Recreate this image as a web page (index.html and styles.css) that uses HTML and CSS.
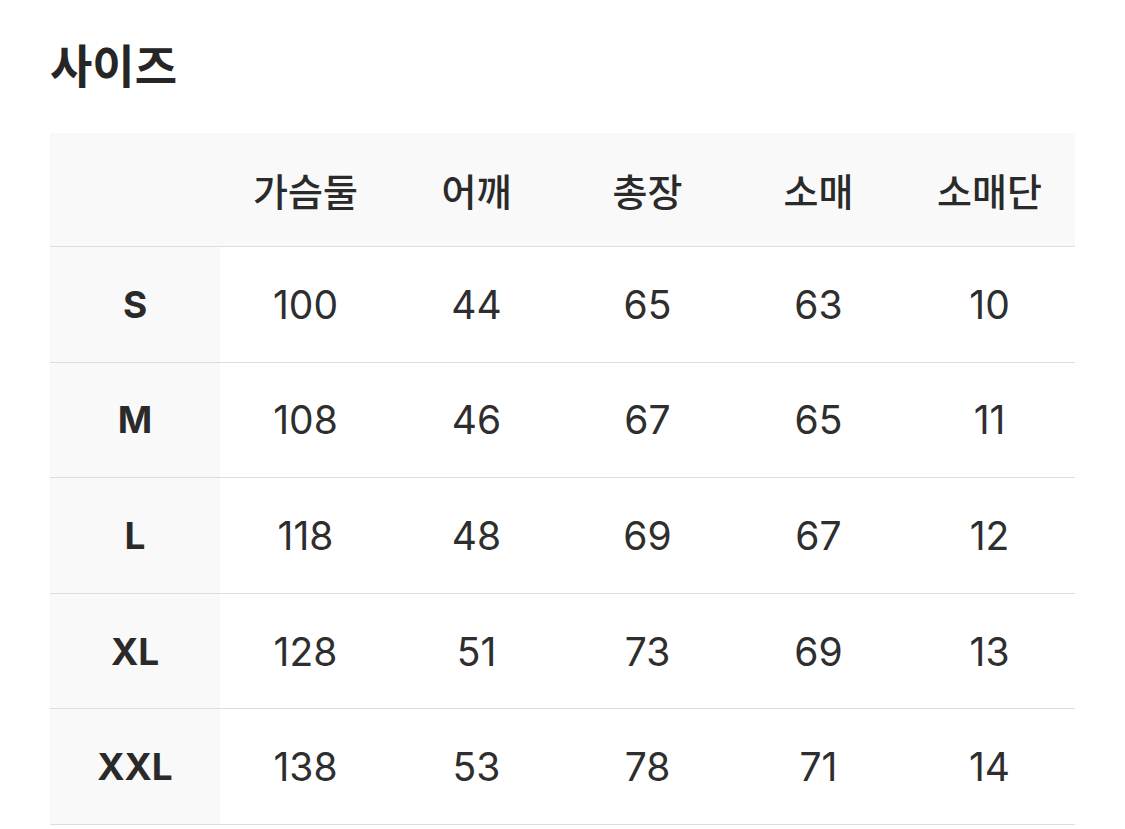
FILE: index.html
```html
<!DOCTYPE html>
<html lang="ko">
<head>
<meta charset="utf-8">
<link rel="stylesheet" href="styles.css">
</head>
<body>
<div class="page">
  <h1 class="title">사이즈</h1>
  <div class="size-table">
    <div class="cell head corner"></div>
    <div class="cell head">가슴둘</div>
    <div class="cell head">어깨</div>
    <div class="cell head">총장</div>
    <div class="cell head">소매</div>
    <div class="cell head">소매단</div>

    <div class="cell label">S</div>
    <div class="cell">100</div><div class="cell">44</div><div class="cell">65</div><div class="cell">63</div><div class="cell">10</div>

    <div class="cell label">M</div>
    <div class="cell">108</div><div class="cell">46</div><div class="cell">67</div><div class="cell">65</div><div class="cell">11</div>

    <div class="cell label">L</div>
    <div class="cell">118</div><div class="cell">48</div><div class="cell">69</div><div class="cell">67</div><div class="cell">12</div>

    <div class="cell label">XL</div>
    <div class="cell">128</div><div class="cell">51</div><div class="cell">73</div><div class="cell">69</div><div class="cell">13</div>

    <div class="cell label">XXL</div>
    <div class="cell">138</div><div class="cell">53</div><div class="cell">78</div><div class="cell">71</div><div class="cell">14</div>
  </div>
</div>
</body>
</html>
```
FILE: styles.css
```css
html, body {
  margin: 0;
  padding: 0;
  background: #ffffff;
}
body {
  font-family: Inter, "Noto Sans CJK KR", sans-serif;
  color: #2b2b2b;
}
.page {
  padding: 37px 50px 0 50px;
  width: 1025px;
}
.title {
  margin: 0;
  height: 52px;
  line-height: 52px;
  font-family: "Noto Sans CJK KR", sans-serif;
  font-size: 46px;
  font-weight: 700;
  color: #262626;
  letter-spacing: 0;
}
.size-table {
  margin-top: 44px;
  display: grid;
  grid-template-columns: 170px repeat(5, 1fr);
  grid-template-rows: 114px repeat(5, 115.6px);
}
.cell {
  display: flex;
  align-items: center;
  justify-content: center;
  border-bottom: 1px solid #dedede;
  font-size: 39px;
  font-weight: 400;
  color: #2e2e2e;
}
.head {
  background: #f9f9f9;
  font-family: "Noto Sans CJK KR", sans-serif;
  font-size: 38px;
  font-weight: 500;
  color: #2a2a2a;
}
.label {
  background: #f9f9f9;
  font-weight: 700;
  font-size: 37px;
  color: #2a2a2a;
}
```
